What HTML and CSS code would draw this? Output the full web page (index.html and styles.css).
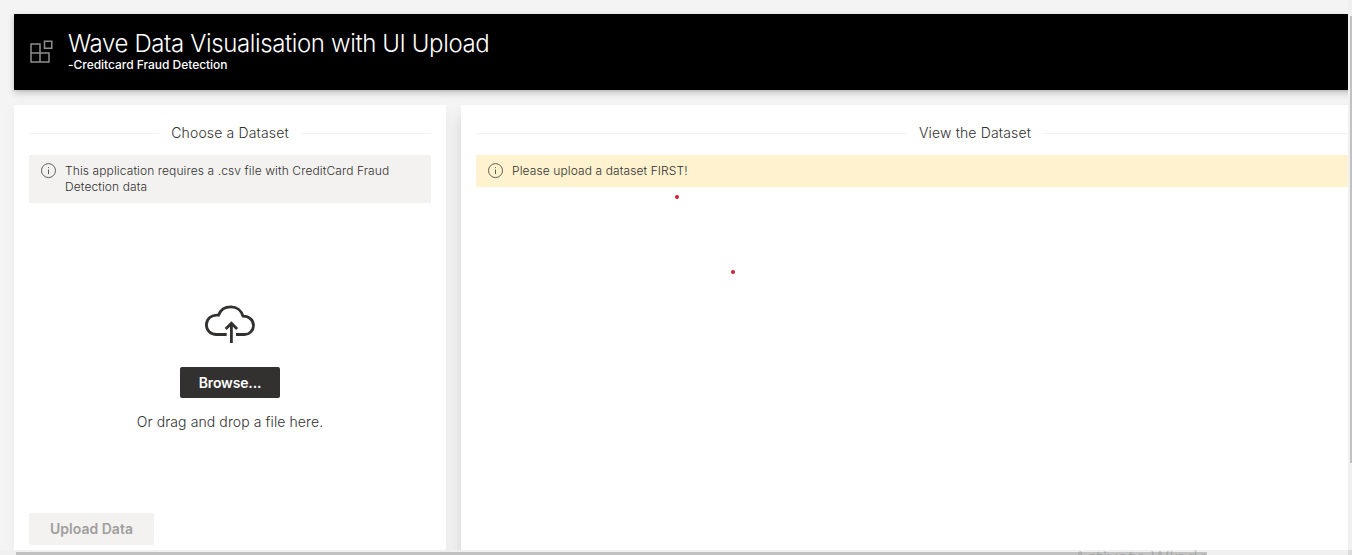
FILE: index.html
```html
<!DOCTYPE html>
<html lang="en">
<head>
<meta charset="utf-8">
<title>Wave Data Visualisation with UI Upload</title>
<link rel="stylesheet" href="styles.css">
</head>
<body>
<div class="window">
  <div class="content">
    <header class="header">
      <svg class="logo" width="24" height="24" viewBox="0 0 24 24"><path d="M2 4h9v9h-9zM2 13h9v9h-9zM11 13h9v9h-9zM15.500 1.200h7.300v7h-7.300z"/></svg>
      <div class="heading">
        <h1 class="title">Wave Data Visualisation with UI Upload</h1>
        <div class="subtitle">-Creditcard Fraud Detection</div>
      </div>
    </header>
    <main class="panels">
      <section class="panel panel-upload">
        <div class="separator">Choose a Dataset</div>
        <div class="message message-info">
          <svg class="info" width="16" height="16" viewBox="0 0 16 16"><circle cx="7.5" cy="7.6" r="7"/><path d="M7.500 6.500v4.500M7.500 4.100v1"/></svg>
          <span>This application requires a .csv file with CreditCard Fraud<br>Detection data</span>
        </div>
        <div class="dropzone">
          <svg class="cloud" width="52" height="40" viewBox="0 0 52 40"><path d="M22.700 30.500H12.500C6.500 30.500 2.400 26.300 2.400 21C2.400 15 7.300 10.400 14.500 11.200C16.300 6 21 2.800 27 2.800C33 2.800 37.500 6.800 39 12.200C45.300 12.200 49.500 16.300 49.500 21.400C49.500 26.500 45.500 30.500 40.500 30.500H32M27.400 39V18.500M21.700 25L27.400 19.300L33.100 25"/></svg>
          <button class="browse">Browse...</button>
          <div class="hint">Or drag and drop a file here.</div>
        </div>
        <button class="upload" disabled>Upload Data</button>
      </section>
      <section class="panel panel-view">
        <div class="separator">View the Dataset</div>
        <div class="message message-warning">
          <svg class="info" width="16" height="16" viewBox="0 0 16 16"><circle cx="7.5" cy="7.6" r="7"/><path d="M7.500 6.500v4.500M7.500 4.100v1"/></svg>
          <span>Please upload a dataset FIRST!</span>
        </div>
      </section>
    </main>
  </div>
  <div class="track-y"><div class="thumb-y"></div></div>
  <div class="track-x"><div class="thumb-x"></div></div>
  <div class="corner"></div>
  <i class="dot dot-a"></i>
  <i class="dot dot-b"></i>
  <div class="watermark">Activate Windows</div>
</div>
</body>
</html>
```

FILE: styles.css
```css
* { box-sizing: border-box; }
body { margin: 0; overflow: hidden; font-family: Inter, "Liberation Sans", sans-serif; color: #323130; }
.window { position: relative; width: 1352px; height: 555px; overflow: hidden; display: grid; grid-template: 550px 5px / 1348px 4px; background: #f4f4f4; }
.content { overflow: hidden; padding: 14px 0 0 14px; }
.header { width: 1475px; height: 76px; padding: 0 15px; display: flex; align-items: center; gap: 15px; background: #000; color: #fff; box-shadow: 0 3px 7px rgba(0,0,0,.2), 0 1px 2px rgba(0,0,0,.1); }
.logo { fill: none; stroke: #8f8f8f; stroke-width: 1.5; flex: none; }
.heading { padding-bottom: 4px; }
.title { margin: 0; font-size: 24px; line-height: 29px; font-weight: 300; letter-spacing: -.38px; white-space: nowrap; }
.subtitle { font-size: 12px; line-height: 14px; font-weight: 500; letter-spacing: -.03px; }
.panels { display: flex; gap: 15px; width: 1475px; margin-top: 15px; }
.panel { height: 500px; padding: 15px; background: #fff; box-shadow: 0 3px 12px rgba(0,0,0,.04); }
.panel-upload { width: 432px; flex: none; display: flex; flex-direction: column; align-items: stretch; }
.panel-view { flex: 1; box-shadow: 0 12px 15px rgba(0,0,0,.15); }
.separator { height: 26px; display: flex; align-items: center; gap: 12px; font-size: 14px; font-weight: 300; line-height: 20px; letter-spacing: .15px; }
.separator::before, .separator::after { content: ""; flex: 1; height: 1px; background: #f3f2f1; }
.message { display: flex; align-items: flex-start; gap: 8px; margin-top: 9px; padding: 8px 12px; font-size: 12px; line-height: 16px; font-weight: 300; letter-spacing: .105px; border-radius: 1px; }
.message-info { background: #f3f2f1; }
.message-warning { background: #fff2ce; }
.info { flex: none; fill: none; stroke: #605e5c; stroke-width: 1; }
.dropzone { height: 310px; display: flex; flex-direction: column; align-items: center; padding-top: 101px; }
.browse, .upload { font: 600 14px/20px Inter, "Liberation Sans", sans-serif; border: 0; border-radius: 2px; padding: 0; }
.cloud { fill: none; stroke: #323130; stroke-width: 2.8; }
.browse { width: 100px; height: 31px; margin-top: 23px; background: #323130; color: #fff; letter-spacing: -.15px; }
.hint { margin-top: 14px; font-size: 14px; line-height: 20px; font-weight: 300; letter-spacing: .1px; }
.upload { width: 125px; height: 32px; background: #f3f2f1; color: #a19f9d; }
.track-y, .track-x { background: #f0f0f0; }
.track-y { padding: 16px 0 0 2px; }
.thumb-y { height: 447px; background: #c1c1c1; }
.track-x { padding: 2px 0 0 16px; }
.thumb-x { width: 1191px; height: 3px; background: #c1c1c1; }
.corner { background: #dcdcdc; }
.dot { position: absolute; width: 4px; height: 4px; border-radius: 50%; background: #d21f30; }
.dot-a { left: 675px; top: 195px; }
.dot-b { left: 731px; top: 270px; }
.watermark { position: absolute; left: 1074px; top: 546px; width: 134px; overflow: hidden; font: 19.5px/24px "Open Sans", sans-serif; color: rgba(120,120,120,.35); white-space: nowrap; }
```
